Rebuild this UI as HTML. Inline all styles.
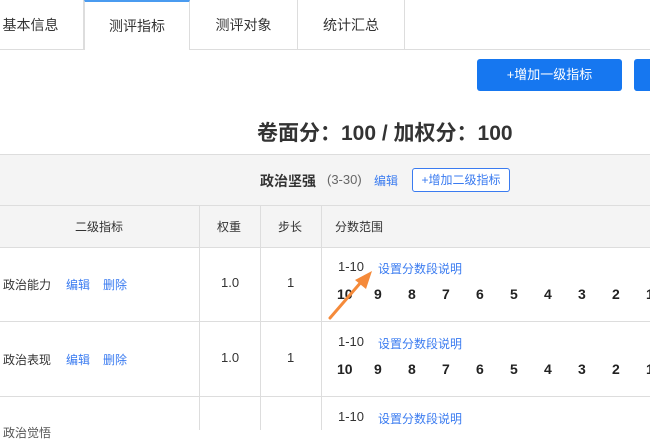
<!DOCTYPE html>
<html><head><meta charset="utf-8"><style>
*{margin:0;padding:0;box-sizing:border-box}
body{width:650px;height:430px;overflow:hidden;background:#fff;font-family:"Liberation Sans","Noto Sans CJK SC",sans-serif;font-size:12px;color:#333;position:relative}
.a{position:absolute;white-space:nowrap}
.d{font-size:13px}
.tab{position:absolute;top:0;height:50px;border-right:1px solid #ddd;border-bottom:1px solid #ddd;text-align:center;line-height:50px;font-size:14px;color:#333}
.blue{color:#3a7bf0}
.vl{position:absolute;width:1px;background:#ddd;top:205px;height:225px}
.hl{position:absolute;left:0;width:650px;height:1px;background:#ddd}
.n{position:absolute;font-weight:bold;font-size:14px;color:#222}
</style></head><body>
<div class="tab" style="left:-22px;width:106px">基本信息</div>
<div class="tab" style="left:84px;width:106px;border-bottom:none;border-top:2px solid #4a9bf0;border-left:1px solid #ddd;line-height:48px">测评指标</div>
<div class="tab" style="left:190px;width:108px">测评对象</div>
<div class="tab" style="left:298px;width:107px">统计汇总</div>
<div class="hl" style="left:404px;width:246px;top:49px"></div>
<div class="a" style="left:477px;top:59px;width:145px;height:32px;background:#1677f0;border-radius:3px;color:#fff;text-align:center;line-height:32px;font-size:13px">+增加一级指标</div>
<div class="a" style="left:634px;top:59px;width:50px;height:32px;background:#1677f0;border-radius:3px"></div>
<div class="a" style="left:257px;top:117px;font-size:21px;font-weight:bold;color:#333">卷面分：100 / 加权分：100</div>
<div class="a" style="left:0;top:154px;width:650px;height:93px;background:#f4f4f4"></div>
<div class="hl" style="top:154px"></div>
<div class="hl" style="top:205px"></div>
<div class="hl" style="top:247px"></div>
<div class="hl" style="top:321px"></div>
<div class="hl" style="top:396px"></div>
<div class="a" style="left:260px;top:171px;font-size:14px;font-weight:bold">政治坚强</div>
<div class="a d" style="left:327px;top:172px;color:#666">(3-30)</div>
<div class="a blue" style="left:374px;top:172px">编辑</div>
<div class="a blue" style="left:412px;top:168px;width:98px;height:24px;border:1px solid #3a7bf0;border-radius:3px;text-align:center;line-height:22px;background:#fff">+增加二级指标</div>
<div class="vl" style="left:199px"></div>
<div class="vl" style="left:260px"></div>
<div class="vl" style="left:321px"></div>
<div class="a" style="left:75px;top:218px">二级指标</div>
<div class="a" style="left:217px;top:218px">权重</div>
<div class="a" style="left:278px;top:218px">步长</div>
<div class="a" style="left:335px;top:218px">分数范围</div>

<div class="a" style="left:3px;top:276px">政治能力</div><div class="a blue" style="left:66px;top:276px">编辑</div><div class="a blue" style="left:103px;top:276px">删除</div>
<div class="a d" style="left:221px;top:275px">1.0</div><div class="a d" style="left:287px;top:275px">1</div>
<div class="a d" style="left:338px;top:259px">1-10</div><div class="a blue" style="left:378px;top:260px">设置分数段说明</div>

<div class="a" style="left:3px;top:351px">政治表现</div><div class="a blue" style="left:66px;top:351px">编辑</div><div class="a blue" style="left:103px;top:351px">删除</div>
<div class="a d" style="left:221px;top:350px">1.0</div><div class="a d" style="left:287px;top:350px">1</div>
<div class="a d" style="left:338px;top:334px">1-10</div><div class="a blue" style="left:378px;top:335px">设置分数段说明</div>
<div class="a d" style="left:338px;top:409px">1-10</div><div class="a blue" style="left:378px;top:410px">设置分数段说明</div>

<div class="n" style="left:337px;top:286px">10</div><div class="n" style="left:374px;top:286px">9</div><div class="n" style="left:408px;top:286px">8</div><div class="n" style="left:442px;top:286px">7</div><div class="n" style="left:476px;top:286px">6</div><div class="n" style="left:510px;top:286px">5</div><div class="n" style="left:544px;top:286px">4</div><div class="n" style="left:578px;top:286px">3</div><div class="n" style="left:612px;top:286px">2</div><div class="n" style="left:646px;top:286px">1</div>
<div class="n" style="left:337px;top:361px">10</div><div class="n" style="left:374px;top:361px">9</div><div class="n" style="left:408px;top:361px">8</div><div class="n" style="left:442px;top:361px">7</div><div class="n" style="left:476px;top:361px">6</div><div class="n" style="left:510px;top:361px">5</div><div class="n" style="left:544px;top:361px">4</div><div class="n" style="left:578px;top:361px">3</div><div class="n" style="left:612px;top:361px">2</div><div class="n" style="left:646px;top:361px">1</div>
<div class="a" style="left:3px;top:424px;color:#555">政治觉悟</div>
<svg class="a" style="left:0;top:0" width="650" height="430"><path d="M330 318 L362 281" stroke="#f58a3a" stroke-width="3" stroke-linecap="round"/><path d="M372 271 L355 280 L366 289 Z" fill="#f58a3a"/></svg>
</body></html>
